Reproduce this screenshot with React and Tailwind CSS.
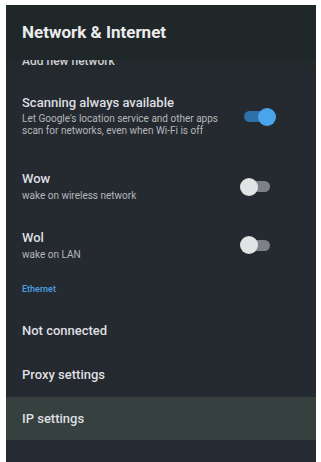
import React from "react";

function Toggle({ on }) {
  if (on) {
    return (
      <div className="relative h-[18px] w-[34px] flex items-center">
        <div className="absolute left-[2px] right-[4px] h-[11px] rounded-full bg-[#2f6fa8] blur-[0.6px]" />
        <div className="absolute right-0 h-[18px] w-[18px] rounded-full bg-[#4aa6ec] blur-[0.6px]" />
      </div>
    );
  }
  return (
    <div className="relative h-[18px] w-[34px] flex items-center">
      <div className="absolute left-[6px] right-[4px] h-[11px] rounded-full bg-[#7d8084] blur-[0.6px]" />
      <div className="absolute left-0 h-[18px] w-[18px] rounded-full bg-[#e2e3e4] blur-[0.6px]" />
    </div>
  );
}

export default function App() {
  return (
    <div
      className="w-[321px] h-[462px] bg-white pl-[6px] pt-[5px] pr-[5px] overflow-hidden"
      style={{ fontFamily: "Roboto, 'Noto Sans', sans-serif" }}
    >
      <div className="h-full bg-[#252a30] flex flex-col">
        <div className="bg-[#1f2729] pl-[16px] pt-[17px] h-[55px]">
          <div className="text-[17px] leading-[20px] font-bold text-[#ececec]">Network &amp; Internet</div>
        </div>
        <div className="bg-[#23292d] pl-[16px] h-[14px] overflow-hidden">
          <div className="text-[12px] leading-[14px] font-medium text-[#cfd0d2] -mt-[6px]">Add new network</div>
        </div>
        <div className="pl-[16px] pr-[40px] flex flex-col">
          <div className="flex items-center h-[83px]">
            <div className="flex-1 min-w-0">
              <div className="text-[13px] leading-[16px] font-medium text-[#dedfe0]">Scanning always available</div>
              <div className="text-[10px] leading-[12px] text-[#b5b7ba] mt-[2px] whitespace-nowrap">
                Let Google's location service and other apps
                <br />
                scan for networks, even when Wi-Fi is off
              </div>
            </div>
            <div className="ml-[8px] mt-[2px]">
              <Toggle on />
            </div>
          </div>
          <div className="flex items-center h-[59px]">
            <div className="flex-1 min-w-0">
              <div className="text-[13px] leading-[16px] font-medium text-[#dedfe0]">Wow</div>
              <div className="text-[10px] leading-[12px] text-[#b5b7ba] mt-[3px]">wake on wireless network</div>
            </div>
            <div className="mr-[2px]">
              <Toggle />
            </div>
          </div>
          <div className="flex items-center h-[58px]">
            <div className="flex-1 min-w-0">
              <div className="text-[13px] leading-[16px] font-medium text-[#dedfe0]">Wol</div>
              <div className="text-[10px] leading-[12px] text-[#b5b7ba] mt-[3px]">wake on LAN</div>
            </div>
            <div className="mr-[2px]">
              <Toggle />
            </div>
          </div>
          <div className="h-[35px] flex items-start pt-[10px]">
            <div className="text-[9px] leading-[11px] font-medium text-[#4e9fe0]">Ethernet</div>
          </div>
        </div>
        <div className="pl-[16px] h-[44px] flex items-center">
          <div className="text-[13px] font-medium text-[#dedfe0]">Not connected</div>
        </div>
        <div className="pl-[16px] h-[44px] flex items-center">
          <div className="text-[13px] font-medium text-[#dedfe0]">Proxy settings</div>
        </div>
        <div className="pl-[16px] h-[43px] flex items-center bg-[#36403f]">
          <div className="text-[13px] font-medium text-[#dedfe0]">IP settings</div>
        </div>
        <div className="flex-1 bg-[#262a33]" />
      </div>
    </div>
  );
}
